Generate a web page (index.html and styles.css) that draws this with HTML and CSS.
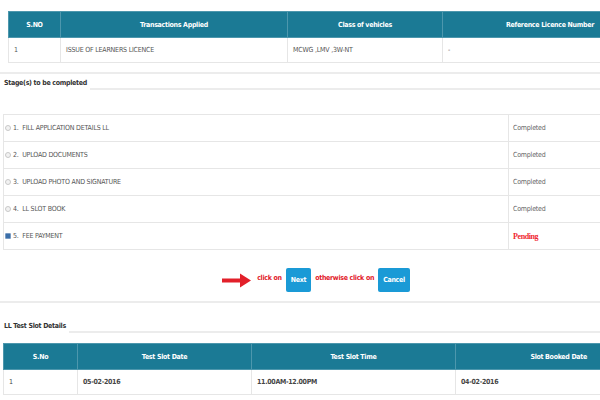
FILE: index.html
```html
<!DOCTYPE html>
<html>
<head>
<meta charset="utf-8">
<link rel="stylesheet" href="styles.css">
</head>
<body>
<div class="page">
  <table class="grid top">
    <colgroup><col style="width:52px"><col style="width:227px"><col style="width:155px"><col></colgroup>
    <thead>
      <tr><th>S.NO</th><th>Transactions Applied</th><th>Class of vehicles</th><th>Reference Licence Number</th></tr>
    </thead>
    <tbody>
      <tr><td>1</td><td>ISSUE OF LEARNERS LICENCE</td><td>MCWG ,LMV ,3W-NT</td><td>-</td></tr>
    </tbody>
  </table>

  <div class="rule first"></div>
  <div class="legend"><span class="legend-text">Stage(s) to be completed</span><span class="legend-line"></span></div>

  <table class="stages">
    <colgroup><col style="width:505px"><col></colgroup>
    <tr><td><span class="radio"></span>1.&nbsp; FILL APPLICATION DETAILS LL</td><td class="done">Completed</td></tr>
    <tr><td><span class="radio"></span>2.&nbsp; UPLOAD DOCUMENTS</td><td class="done">Completed</td></tr>
    <tr><td><span class="radio"></span>3.&nbsp; UPLOAD PHOTO AND SIGNATURE</td><td class="done">Completed</td></tr>
    <tr><td><span class="radio"></span>4.&nbsp; LL SLOT BOOK</td><td class="done">Completed</td></tr>
    <tr><td><span class="radio checked"></span>5.&nbsp; FEE PAYMENT</td><td class="pending">Pending</td></tr>
  </table>

  <div class="actions">
    <svg class="arrow" width="29" height="15" viewBox="0 0 29 15"><path d="M0 5.5H18V0.5L29 7.5L18 14.5V9.5H0Z" fill="#e2202a"/></svg>
    <span class="note">click on</span>
    <span class="btn">Next</span>
    <span class="note">otherwise click on</span>
    <span class="btn">Cancel</span>
  </div>

  <div class="rule second"></div>
  <div class="legend slot"><span class="legend-text">LL Test Slot Details</span><span class="legend-line"></span></div>

  <table class="grid bottom">
    <colgroup><col style="width:74px"><col style="width:174px"><col style="width:204px"><col></colgroup>
    <thead>
      <tr><th>S.No</th><th>Test Slot Date</th><th>Test Slot Time</th><th>Slot Booked Date</th></tr>
    </thead>
    <tbody>
      <tr><td>1</td><td class="b">05-02-2016</td><td class="b">11.00AM-12.00PM</td><td class="b">04-02-2016</td></tr>
    </tbody>
  </table>
</div>
</body>
</html>
```
FILE: styles.css
```css
html, body {
  margin: 0;
  padding: 0;
  background: #fff;
  overflow: hidden;
}
body {
  width: 600px;
  height: 400px;
  font-family: "DejaVu Sans Condensed", "Liberation Sans", sans-serif;
  font-size: 7px;
  letter-spacing: -0.2px;
  color: #555;
}
.page {
  width: 600px;
  overflow: hidden;
}
table {
  border-collapse: collapse;
  table-layout: fixed;
}
.grid th {
  background: #1b7a95;
  color: #fff;
  font-weight: bold;
  letter-spacing: -0.3px;
  text-align: center;
  height: 25px;
  padding: 0 4px;
  border: 1px solid #4d97ad;
  white-space: nowrap;
}
.grid td {
  height: 24px;
  padding: 0 5px;
  border: 1px solid #e6e6e6;
  white-space: nowrap;
  color: #555;
}
.grid.top {
  margin: 11px 0 0 8px;
  width: 670px;
}
.grid.top th:last-child { text-align: right; padding-right: 83px; }
.rule {
  height: 2px;
  background: #ececec;
  width: 600px;
}
.rule.first { margin-top: 9px; }
.legend {
  display: flex;
  align-items: flex-end;
  padding-left: 4px;
  margin-top: 4px;
}
.legend-text {
  font-weight: bold;
  letter-spacing: -0.3px;
  color: #333;
  line-height: 10px;
  white-space: nowrap;
}
.legend-line {
  flex: 1;
  height: 2px;
  background: #ececec;
  margin-left: 3px;
  margin-bottom: -2px;
}
.stages {
  margin: 26px 0 0 3px;
  width: 660px;
}
.stages td {
  height: 26px;
  border: 1px solid #e6e6e6;
  padding: 0 4px 0 1px;
  white-space: nowrap;
  color: #555;
}
.stages td.done { padding-left: 4px; color: #666; }
.stages td.pending {
  padding-left: 4px;
  color: #f0282f;
  font-family: "Liberation Serif", serif;
  font-size: 8px;
  letter-spacing: -0.4px;
  font-weight: bold;
}
.radio {
  display: inline-block;
  width: 4px;
  height: 4px;
  border-radius: 50%;
  border: 1px solid #c8c8c8;
  background: #f2f2f2;
  margin-right: 2px;
  vertical-align: -1px;
}
.radio.checked {
  border-radius: 1px;
  background: #3b6ea8;
  border-color: #7a9cc4;
}
.actions {
  display: flex;
  align-items: center;
  justify-content: center;
  gap: 4px;
  height: 24px;
  margin: 18px 0 9px 0;
  padding-left: 32px;
}
.arrow { margin-right: 2px; margin-top: 1px; }
.note {
  color: #e2202a;
  font-weight: bold;
  letter-spacing: -0.3px;
  margin-top: -5px;
}
.btn {
  display: inline-block;
  background: #1a9ad6;
  color: #fff;
  border-radius: 2px;
  padding: 0 5px;
  height: 24px;
  line-height: 24px;
  font-weight: bold;
  letter-spacing: -0.3px;
}
.legend.slot { margin-top: 18px; }
.grid.bottom {
  margin: 12px 0 0 3px;
  width: 680px;
}
.grid.bottom th:last-child { text-align: right; padding-right: 95px; }
.grid.bottom td { color: #444; }
.grid.bottom td.b { font-weight: bold; letter-spacing: -0.3px; }
```
